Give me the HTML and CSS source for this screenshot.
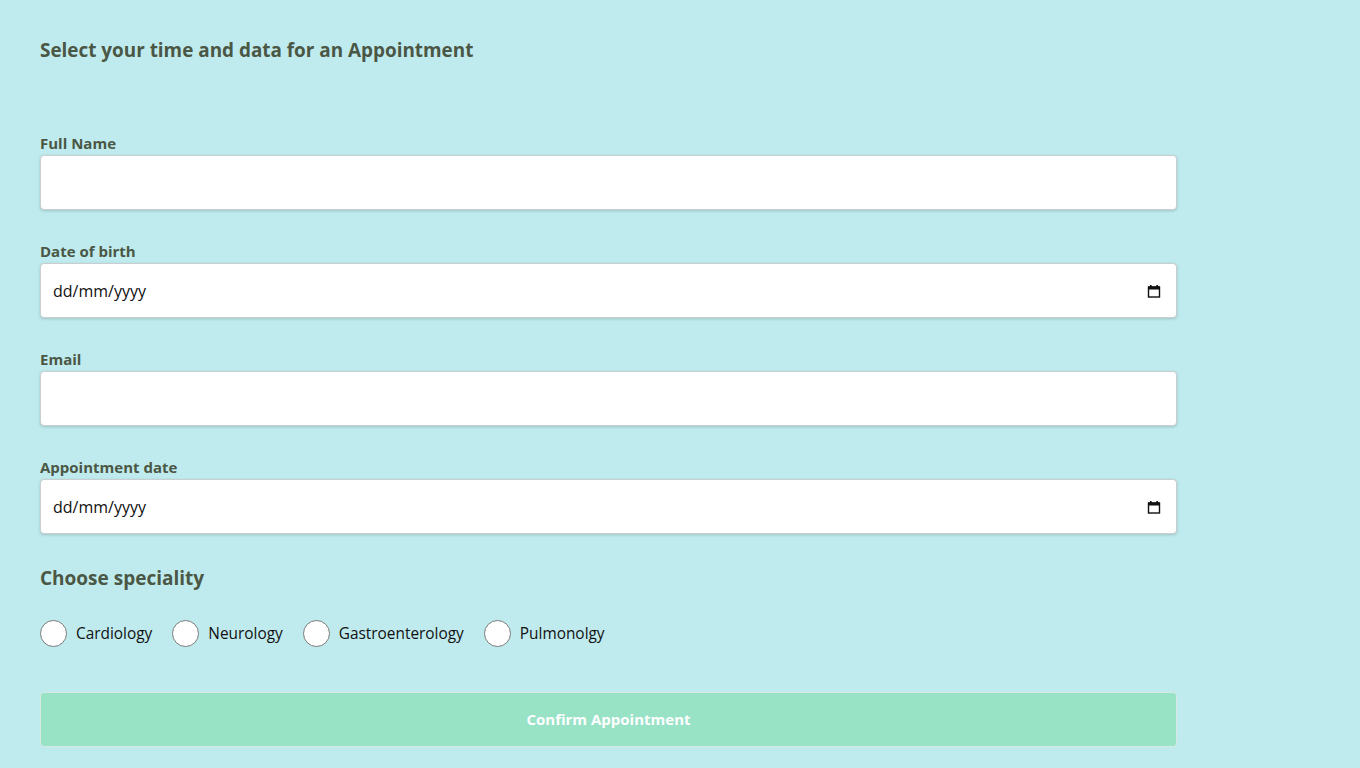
FILE: index.html
```html
<!DOCTYPE html>
<html lang="en">
<head>
<meta charset="utf-8">
<title>Appointment</title>
<link rel="stylesheet" href="styles.css">
</head>
<body>
<main class="page">
  <h2 class="title">Select your time and data for an Appointment</h2>
  <form class="form">
    <div class="field">
      <label class="label" for="name">Full Name</label>
      <input class="input" id="name" type="text">
    </div>
    <div class="field">
      <label class="label" for="dob">Date of birth</label>
      <div class="date-wrap">
        <input class="input" id="dob" type="text" placeholder="dd/mm/yyyy">
        <svg class="cal" width="14" height="14" viewBox="0 0 14 14"><rect x="1.5" y="3" width="11" height="10" fill="none" stroke="#111" stroke-width="1.4"/><rect x="1" y="2.5" width="12" height="3" fill="#111"/><rect x="3" y="1" width="1.6" height="2" fill="#111"/><rect x="9.4" y="1" width="1.6" height="2" fill="#111"/></svg>
      </div>
    </div>
    <div class="field">
      <label class="label" for="email">Email</label>
      <input class="input" id="email" type="text">
    </div>
    <div class="field">
      <label class="label" for="appt">Appointment date</label>
      <div class="date-wrap">
        <input class="input" id="appt" type="text" placeholder="dd/mm/yyyy">
        <svg class="cal" width="14" height="14" viewBox="0 0 14 14"><rect x="1.5" y="3" width="11" height="10" fill="none" stroke="#111" stroke-width="1.4"/><rect x="1" y="2.5" width="12" height="3" fill="#111"/><rect x="3" y="1" width="1.6" height="2" fill="#111"/><rect x="9.4" y="1" width="1.6" height="2" fill="#111"/></svg>
      </div>
    </div>
    <h3 class="subtitle">Choose speciality</h3>
    <div class="radios">
      <label class="radio"><input type="radio" name="spec"><span>Cardiology</span></label>
      <label class="radio"><input type="radio" name="spec"><span>Neurology</span></label>
      <label class="radio"><input type="radio" name="spec"><span>Gastroenterology</span></label>
      <label class="radio"><input type="radio" name="spec"><span>Pulmonolgy</span></label>
    </div>
    <button class="btn" type="button">Confirm Appointment</button>
  </form>
</main>
<script src="script.js"></script>
</body>
</html>
```

FILE: styles.css
```css
html, body {
  margin: 0;
  background: #bfebee;
}
body {
  font-family: "Open Sans", "Noto Sans", sans-serif;
  color: #4b5745;
}
.page {
  padding: 157px 0 420px 40px;
  max-width: 1137px;
}
.title {
  margin: 0;
  font-size: 18.9px;
  line-height: 26px;
  font-weight: 700;
}
.form {
  display: flex;
  flex-direction: column;
  margin-top: 70px;
}
.field {
  display: flex;
  flex-direction: column;
  margin-bottom: 31px;
}
.label {
  font-size: 15px;
  font-weight: 700;
  line-height: 20px;
  margin-bottom: 2px;
}
.input {
  box-sizing: border-box;
  width: 100%;
  height: 55px;
  border: 1px solid #c9cfd0;
  border-radius: 4px;
  box-shadow: 0 1px 3px rgba(0,0,0,0.18);
  background: #fff;
  padding: 0 12px;
  font-family: "Open Sans", "Noto Sans", sans-serif;
  font-size: 16px;
  color: #111;
  outline: none;
}
.input::placeholder {
  color: #111;
  opacity: 1;
}
.date-wrap {
  position: relative;
}
.cal {
  position: absolute;
  right: 16px;
  top: 21px;
}
.subtitle {
  margin: 0;
  font-size: 19px;
  line-height: 26px;
  font-weight: 700;
}
.radios {
  display: flex;
  align-items: center;
  margin-top: 29px;
  gap: 20px;
}
.radio {
  display: flex;
  align-items: center;
  gap: 9px;
  font-size: 15.4px;
  line-height: 27px;
  color: #111;
}
.radio input {
  appearance: none;
  -webkit-appearance: none;
  margin: 0;
  width: 27px;
  height: 27px;
  border-radius: 50%;
  border: 1px solid #7a7a7a;
  background: #fff;
}
.btn {
  margin-top: 45px;
  height: 55px;
  width: 100%;
  background: #98e2c6;
  border: 1px solid #d7e8e2;
  border-radius: 4px;
  color: #fff;
  font-family: "Open Sans", "Noto Sans", sans-serif;
  font-size: 15px;
  font-weight: 700;
  line-height: 20px;
  padding: 0 0 2px;
}
```

FILE: script.js
```js
window.scrollTo(0, 120);
```
